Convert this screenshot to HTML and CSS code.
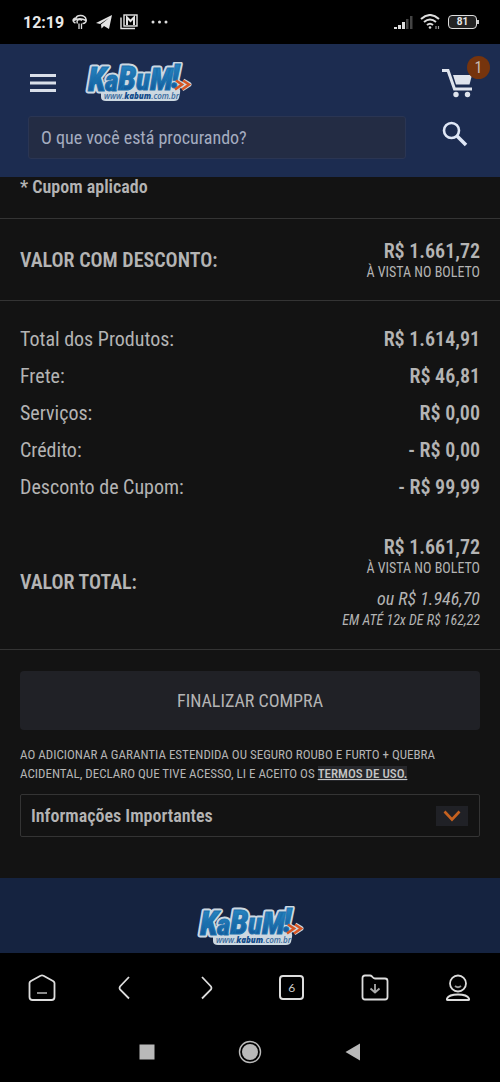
FILE: index.html
```html
<!DOCTYPE html>
<html lang="pt-BR">
<head>
<meta charset="utf-8">
<meta name="viewport" content="width=device-width, initial-scale=1">
<title>KaBuM! - Carrinho</title>
<link rel="stylesheet" href="styles.css">
</head>
<body>
<svg class="defs" aria-hidden="true">
  <defs>
    <linearGradient id="blue" x1="0" y1="0" x2="0" y2="1">
      <stop offset="0" stop-color="#2b8fca"/>
      <stop offset="1" stop-color="#0d4f91"/>
    </linearGradient>
    <symbol id="logo" viewBox="0 0 108 42">
      <path d="M20 26H93Q97 26 96 31L95 36Q94 39 90 39H22Q17 39 17 35V29Z" fill="#ccd8e1"/>
      <g class="logo-name" fill="#ccd8e1" stroke="#ccd8e1" stroke-width="5" stroke-linejoin="round">
        <text x="4" y="29" font-size="33">K</text><text x="21" y="29" font-size="29">a</text><text x="34" y="28" font-size="33">B</text><text x="52" y="28" font-size="29">u</text><text x="66" y="28" font-size="31">M</text><text x="87" y="26" font-size="33">!</text>
      </g>
      <path d="M92 19L98 22.500L91 27M99 19L105 22.500L98 27" fill="none" stroke="#ccd8e1" stroke-width="5" stroke-linejoin="round"/>
      <g class="logo-name" fill="url(#blue)" stroke="#1a70ad" stroke-width="1">
        <text x="4" y="29" font-size="33">K</text><text x="21" y="29" font-size="29">a</text><text x="34" y="28" font-size="33">B</text><text x="52" y="28" font-size="29">u</text><text x="66" y="28" font-size="31">M</text><text x="87" y="26" font-size="33">!</text>
      </g>
      <path d="M92 18.500L98 22.500L91 27.500M99 18.500L105 22.500L98 27.500" fill="none" stroke="#d65523" stroke-width="2.600"/>
      <text x="20" y="37" class="logo-url">www.<tspan class="logo-url-strong">kabum</tspan>.com.br</text>
    </symbol>
  </defs>
</svg>

<div class="status">
  <div class="status-left">
    <span class="clock">12:19</span>
    <svg width="16" height="16" viewBox="0 0 16 16" fill="none" stroke="#ddd" stroke-width="1.500"><path d="M3.500 9C0 7.500 0.500 4.500 4 4C5 0.500 12.500 0.500 14 5C15 7.500 13 9.500 10.500 9.500M1.500 6.500Q8 3 14 6.500M5.500 9.500C3.500 6 8 4.500 10 6.500"/><path d="M7 9.500V15M9.500 9.500V15" stroke-width="1.300"/></svg>
    <svg width="16" height="16" viewBox="0 0 16 16" fill="#e4e4e4"><path d="M0 9L16 1L13 15L8 12L5.500 14.500L5 10.500L13 4L4 10Z"/></svg>
    <svg width="18" height="16" viewBox="0 0 18 16" fill="none" stroke="#e4e4e4" stroke-width="1.400"><path d="M1 3.500V14.500H15"/><rect x="4" y="1" width="13" height="11"/><path d="M7 11V3.500L10.500 7L14 3.500V11" stroke-width="2"/></svg>
    <svg class="more" width="18" height="16" viewBox="0 0 18 16" fill="#ddd"><circle cx="3" cy="8" r="1.500"/><circle cx="9.500" cy="8" r="1.500"/><circle cx="16" cy="8" r="1.500"/></svg>
  </div>
  <div class="status-right">
    <svg width="19" height="15" viewBox="0 0 19 15"><path d="M0 14V12H3V14ZM4 14V10H7V14ZM8 14V7H11V14Z" fill="#ddd"/><path d="M12 14V4H14.500V14ZM16 14V1H18.500V14Z" fill="#444"/></svg>
    <svg width="21" height="16" viewBox="0 0 21 16" fill="none" stroke="#ddd" stroke-width="2"><path d="M1 5Q10 -3 19 5M4 8Q10 3 16 8M7 11Q10 8.500 13 11"/><circle cx="10" cy="13.500" r="1.300" fill="#ddd" stroke="none"/><path d="M16 12V15M18.500 12V15" stroke="#999" stroke-width="1.200"/></svg>
    <div class="battery"><span>81</span></div>
  </div>
</div>

<header class="header">
  <div class="brand-row">
    <button class="icon-btn" aria-label="Menu"><svg width="26" height="20" viewBox="0 0 26 20" fill="#d9dfe9"><path d="M0 1H26V4H0ZM0 8.500H26V11.500H0ZM0 16H26V19H0Z"/></svg></button>
    <a class="logo-link" href="#" aria-label="KaBuM!"><svg width="108" height="42"><use href="#logo"/></svg></a>
    <button class="icon-btn cart" aria-label="Carrinho">
      <svg width="31" height="30" viewBox="0 0 31 30"><path d="M0 2.500H6L12.500 21H30" fill="none" stroke="#dfe4ec" stroke-width="3"/><path d="M11 7H30L27.500 16.500H14Z" fill="#dfe4ec"/><circle cx="14" cy="26.500" r="2.700" fill="#dfe4ec"/><circle cx="25.500" cy="26.500" r="2.700" fill="#dfe4ec"/></svg>
      <span class="badge">1</span>
    </button>
  </div>
  <form class="search-row">
    <input class="search" type="text" aria-label="Buscar" placeholder="O que você está procurando?">
    <button class="icon-btn" type="button" aria-label="Pesquisar"><svg width="26" height="26" viewBox="0 0 26 26" fill="none" stroke="#dfe7f6"><circle cx="9.500" cy="9.500" r="7.500" stroke-width="2.600"/><path d="M15 15L24 24" stroke-width="3.600"/></svg></button>
  </form>
</header>

<main>
  <p class="coupon">* Cupom aplicado</p>
  <section class="discount">
    <h2 class="label">VALOR COM DESCONTO:</h2>
    <div class="amounts">
      <p class="price">R$ 1.661,72</p>
      <p class="note">À VISTA NO BOLETO</p>
    </div>
  </section>
  <section class="summary">
    <dl class="lines">
      <div><dt>Total dos Produtos:</dt><dd>R$ 1.614,91</dd></div>
      <div><dt>Frete:</dt><dd>R$ 46,81</dd></div>
      <div><dt>Serviços:</dt><dd>R$ 0,00</dd></div>
      <div><dt>Crédito:</dt><dd>- R$ 0,00</dd></div>
      <div><dt>Desconto de Cupom:</dt><dd>- R$ 99,99</dd></div>
    </dl>
    <div class="total">
      <h2 class="label">VALOR TOTAL:</h2>
      <div class="amounts">
        <p class="price">R$ 1.661,72</p>
        <p class="note">À VISTA NO BOLETO</p>
        <p class="alt-price">ou R$ 1.946,70</p>
        <p class="alt-note">EM ATÉ 12x DE R$ 162,22</p>
      </div>
    </div>
  </section>
  <section class="checkout">
    <button class="finish">FINALIZAR COMPRA</button>
    <p class="terms">AO ADICIONAR A GARANTIA ESTENDIDA OU SEGURO ROUBO E FURTO + QUEBRA ACIDENTAL, DECLARO QUE TIVE ACESSO, LI E ACEITO OS <a href="#">TERMOS DE USO.</a></p>
    <button class="info">Informações Importantes
      <span class="chevron"><svg width="18" height="12" viewBox="0 0 18 12" fill="none" stroke="#c6611f" stroke-width="2.600"><path d="M1.500 1.500L9 9.500L16.500 1.500"/></svg></span>
    </button>
  </section>
</main>

<footer class="footer"><svg width="108" height="42"><use href="#logo"/></svg></footer>

<nav class="browser-nav">
  <button class="icon-btn" aria-label="Início"><svg width="28" height="28" viewBox="0 0 28 28" fill="none" stroke="#ddd" stroke-width="1.800" stroke-linejoin="round"><path d="M1.500 9Q1.500 8 3 7L12.500 1.700Q14 1 15.500 1.700L25 7Q26.500 8 26.500 9V23Q26.500 26 23.500 26H4.500Q1.500 26 1.500 23Z"/><path d="M9 19H19" stroke="#999"/></svg></button>
  <button class="icon-btn" aria-label="Voltar"><svg width="28" height="28" viewBox="0 0 28 28" fill="none" stroke="#ddd" stroke-width="1.800"><path d="M18 3L9 12.500Q8 14 9 15.500L18 24.500"/></svg></button>
  <button class="icon-btn" aria-label="Avançar"><svg width="28" height="28" viewBox="0 0 28 28" fill="none" stroke="#ddd" stroke-width="1.800"><path d="M8 3L17 12.500Q18 14 17 15.500L8 24.500"/></svg></button>
  <button class="icon-btn tabs" aria-label="Abas"><span>6</span></button>
  <button class="icon-btn" aria-label="Downloads"><svg width="28" height="28" viewBox="0 0 28 28" fill="none" stroke="#ddd" stroke-width="1.800" stroke-linejoin="round"><path d="M1.500 4Q1.500 1.500 4 1.500H9Q10 1.500 11 2.500Q12.500 4.500 14 4.500H24Q26.500 4.500 26.500 7V23Q26.500 25.500 24 25.500H4Q1.500 25.500 1.500 23Z"/><path d="M14 10V18.500M9.500 14.500L14 18.500L18.500 14.500" stroke="#aaa"/></svg></button>
  <button class="icon-btn" aria-label="Perfil"><svg width="28" height="28" viewBox="0 0 28 28" fill="none" stroke="#ddd" stroke-width="1.800"><circle cx="14" cy="9.500" r="8"/><path d="M11 12Q14 14.500 17 12" stroke="#999"/><path d="M3.500 26Q2.500 26 3 24.500Q5 20.500 14 20.500Q23 20.500 25 24.500Q25.500 26 24.500 26Z"/></svg></button>
</nav>

<nav class="system-nav">
  <button class="icon-btn" aria-label="Recentes"><svg width="24" height="24" viewBox="0 0 24 24"><rect x="4.500" y="4.500" width="15" height="15" fill="#b9b9b9"/></svg></button>
  <button class="icon-btn" aria-label="Tela inicial"><svg width="24" height="24" viewBox="0 0 24 24"><circle cx="12" cy="12" r="10.500" fill="none" stroke="#bbb" stroke-width="1.400"/><circle cx="12" cy="12" r="8" fill="#b9b9b9"/></svg></button>
  <button class="icon-btn" aria-label="Retornar"><svg width="24" height="24" viewBox="0 0 24 24"><path d="M4.500 12L19 3.500V20.500Z" fill="#b9b9b9"/></svg></button>
</nav>
</body>
</html>
```

FILE: styles.css
```css
* { box-sizing: border-box; }

body {
  margin: 0;
  background: #131313;
  color: #b4b4b4;
  font-family: "Roboto Condensed", "Liberation Sans Narrow", Roboto, sans-serif;
  font-size: 20px;
}

p, h2, dl, dd { margin: 0; }

svg { display: block; }

.defs { position: absolute; width: 0; height: 0; }

.icon-btn {
  display: flex;
  align-items: center;
  justify-content: center;
  padding: 0;
  border: 0;
  background: none;
  color: inherit;
  font: inherit;
}

/* Phone status bar */
.status {
  display: flex;
  align-items: center;
  justify-content: space-between;
  height: 44px;
  padding: 0 20px 0 23px;
  background: #000;
  color: #e8e8e8;
  font-family: Roboto, sans-serif;
}

.status-left, .status-right { display: flex; align-items: center; gap: 7px; }
.status-left { gap: 8px; }
.status-left .more { margin-left: 4px; }
.clock { font-size: 16px; font-weight: 700; }

.battery {
  position: relative;
  width: 29px;
  height: 14px;
  margin-right: 3px;
  border: 1px solid #ddd;
  border-radius: 4px;
  background: #222;
  font-size: 10px;
  font-weight: 700;
  line-height: 12px;
  text-align: center;
}

.battery::after {
  content: "";
  position: absolute;
  top: 4px;
  right: -3px;
  width: 2px;
  height: 4px;
  background: #ccc;
}

/* Store header */
.header {
  height: 133px;
  padding: 17px 27px 0 28px;
  background: #1c2c50;
}

.brand-row { display: flex; align-items: center; height: 44px; padding-left: 2px; }
.logo-link { margin: 0 auto 0 28px; }
.logo-name { font-family: "Roboto Condensed", Roboto, sans-serif; font-style: italic; font-weight: 800; }
.logo-url { font-family: "Open Sans", sans-serif; font-size: 8px; font-style: italic; font-weight: 600; fill: #37689c; }
.logo-url-strong { font-weight: 800; fill: #124b8a; }

.cart { position: relative; }

.badge {
  position: absolute;
  top: -12px;
  right: -17px;
  width: 23px;
  height: 23px;
  border-radius: 50%;
  background: #76340d;
  color: #c9bdb5;
  font-size: 16px;
  line-height: 23px;
  text-align: center;
}

.search-row { display: flex; gap: 36px; margin-top: 11px; padding-right: 5px; }

.search {
  flex: 1;
  min-width: 0;
  height: 43px;
  padding: 0 12px;
  border: 1px solid #2a3553;
  border-radius: 3px;
  background: #232c44;
  color: #a5adc0;
  font: 18px "Roboto Condensed", "Liberation Sans Narrow", Roboto, sans-serif;
}

.search::placeholder { color: #a5adc0; opacity: 1; }
.search-row .icon-btn { height: 36px; }

/* Order values */
.coupon {
  padding: 0 20px 21px;
  border-bottom: 1px solid #343434;
  font-size: 18px;
  font-weight: 600;
  line-height: 20px;
}

.discount, .total { display: flex; align-items: center; justify-content: space-between; }
.discount { padding: 20px 20px 19px; border-bottom: 1px solid #343434; }
.label { font-size: 20px; font-weight: 600; line-height: 24px; }
.amounts { text-align: right; }
.price { font-size: 20px; font-weight: 600; line-height: 24px; }
.note { font-size: 14px; line-height: 18px; }

.summary { padding: 20px 20px 20px; border-bottom: 1px solid #343434; }
.lines > div { display: flex; justify-content: space-between; line-height: 37px; }
.lines dd { font-weight: 600; }
.total { padding-top: 29px; }
.alt-price { padding-top: 10px; font-size: 18px; font-style: italic; line-height: 24px; }
.alt-note { font-size: 14px; font-style: italic; line-height: 18px; }

/* Checkout */
.checkout { padding: 21px 20px 41px; }

.finish {
  width: 100%;
  height: 59px;
  border: 0;
  border-radius: 4px;
  background: #202126;
  color: #b4b4b4;
  font: inherit;
  font-size: 18px;
}

.terms { margin: 15px 0 11px; font-size: 13px; line-height: 19px; }
.terms a { background: #26272b; color: #c4c4c4; font-weight: 500; }

.info {
  display: flex;
  align-items: center;
  justify-content: space-between;
  width: 100%;
  height: 43px;
  padding: 0 11px 0 10px;
  border: 1px solid #343434;
  border-radius: 2px;
  background: none;
  color: #b4b4b4;
  font: inherit;
  font-size: 18px;
  font-weight: 600;
}

.chevron {
  display: flex;
  align-items: center;
  justify-content: center;
  width: 32px;
  height: 20px;
  background: #202126;
}

.footer {
  display: flex;
  justify-content: center;
  padding: 28px 0 5px;
  background: #152340;
}

/* Browser and system bars */
.browser-nav {
  display: grid;
  grid-template-columns: repeat(6, 1fr);
  height: 69px;
  background: #000;
}

.tabs span {
  width: 25px;
  height: 25px;
  border: 2px solid #ddd;
  border-radius: 4px;
  color: #ccc;
  font-family: Lato, sans-serif;
  font-size: 12px;
  line-height: 21px;
}

.system-nav {
  display: flex;
  align-items: center;
  justify-content: center;
  gap: 79px;
  height: 60px;
  background: #000;
}
```
